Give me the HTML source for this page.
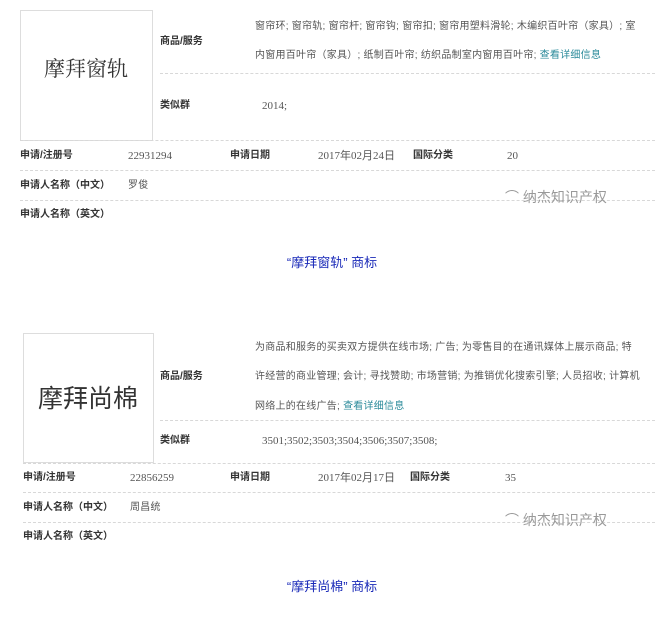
<!DOCTYPE html>
<html><head><meta charset="utf-8"><style>
body{margin:0;width:664px;height:633px;background:#fff;position:relative;overflow:hidden;font-family:"Liberation Sans","Noto Sans CJK SC",sans-serif;color:#444}
.a{position:absolute;white-space:nowrap;line-height:1}
.s{font-size:10px;color:#555;letter-spacing:0.25px}
.b{font-size:10px;font-weight:bold;color:#333}
.v{font-size:11px;color:#555;font-family:"Liberation Serif","Noto Sans CJK SC",serif}
.d{position:absolute;border-top:1px dashed #d8d8d8;height:0}
.box{position:absolute;border:1px solid #ddd;background:#fff}
.lk{color:#2a8a9a}
.cap{position:absolute;width:664px;text-align:center;font-size:13px;color:#1a2ab8;line-height:1}
.wm{font-size:14px;color:#999}
</style></head><body>
<div class="box" style="left:20px;top:10px;width:131px;height:129px"></div>
<div class="a" style="left:44px;top:58px;font-size:21px;color:#333;font-family:'Noto Serif CJK SC',serif">摩拜窗轨</div>
<div class="a s" style="left:255px;top:22px">窗帘环; 窗帘轨; 窗帘杆; 窗帘钩; 窗帘扣; 窗帘用塑料滑轮; 木编织百叶帘（家具）; 室</div>
<div class="a s" style="left:255px;top:51px">内窗用百叶帘（家具）; 纸制百叶帘; 纺织品制室内窗用百叶帘; <span class="lk">查看详细信息</span></div>
<div class="a b" style="left:160px;top:37px">商品/服务</div>
<div class="d" style="left:160px;top:73px;width:495px"></div>
<div class="a b" style="left:160px;top:101px">类似群</div>
<div class="a v" style="left:262px;top:101px">2014;</div>
<div class="d" style="left:20px;top:140px;width:635px"></div>
<div class="a b" style="left:20px;top:151px">申请/注册号</div>
<div class="a v" style="left:128px;top:151px">22931294</div>
<div class="a b" style="left:230px;top:151px">申请日期</div>
<div class="a v" style="left:318px;top:151px">2017年02月24日</div>
<div class="a b" style="left:413px;top:151px">国际分类</div>
<div class="a v" style="left:507px;top:151px">20</div>
<div class="d" style="left:20px;top:170px;width:635px"></div>
<div class="a b" style="left:20px;top:181px">申请人名称（中文）</div>
<div class="a s" style="left:128px;top:181px">罗俊</div>
<div class="d" style="left:20px;top:200px;width:635px"></div>
<div class="a wm" style="left:505px;top:190px">⌒ 纳杰知识产权</div>
<div class="a b" style="left:20px;top:210px">申请人名称（英文）</div>
<div class="cap" style="top:256px">“摩拜窗轨” 商标</div>

<div class="box" style="left:23px;top:333px;width:129px;height:128px"></div>
<div class="a" style="left:38px;top:387px;font-size:25px;color:#333">摩拜尚棉</div>
<div class="a s" style="left:255px;top:343px">为商品和服务的买卖双方提供在线市场; 广告; 为零售目的在通讯媒体上展示商品; 特</div>
<div class="a s" style="left:255px;top:372px">许经营的商业管理; 会计; 寻找赞助; 市场营销; 为推销优化搜索引擎; 人员招收; 计算机</div>
<div class="a s" style="left:255px;top:402px">网络上的在线广告; <span class="lk">查看详细信息</span></div>
<div class="a b" style="left:160px;top:372px">商品/服务</div>
<div class="d" style="left:160px;top:420px;width:495px"></div>
<div class="a b" style="left:160px;top:436px">类似群</div>
<div class="a v" style="left:262px;top:436px">3501;3502;3503;3504;3506;3507;3508;</div>
<div class="d" style="left:23px;top:463px;width:632px"></div>
<div class="a b" style="left:23px;top:473px">申请/注册号</div>
<div class="a v" style="left:130px;top:473px">22856259</div>
<div class="a b" style="left:230px;top:473px">申请日期</div>
<div class="a v" style="left:318px;top:473px">2017年02月17日</div>
<div class="a b" style="left:410px;top:473px">国际分类</div>
<div class="a v" style="left:505px;top:473px">35</div>
<div class="d" style="left:23px;top:492px;width:632px"></div>
<div class="a b" style="left:23px;top:503px">申请人名称（中文）</div>
<div class="a s" style="left:130px;top:503px">周昌统</div>
<div class="d" style="left:23px;top:522px;width:632px"></div>
<div class="a wm" style="left:505px;top:513px">⌒ 纳杰知识产权</div>
<div class="a b" style="left:23px;top:532px">申请人名称（英文）</div>
<div class="cap" style="top:580px">“摩拜尚棉” 商标</div>
</body></html>
